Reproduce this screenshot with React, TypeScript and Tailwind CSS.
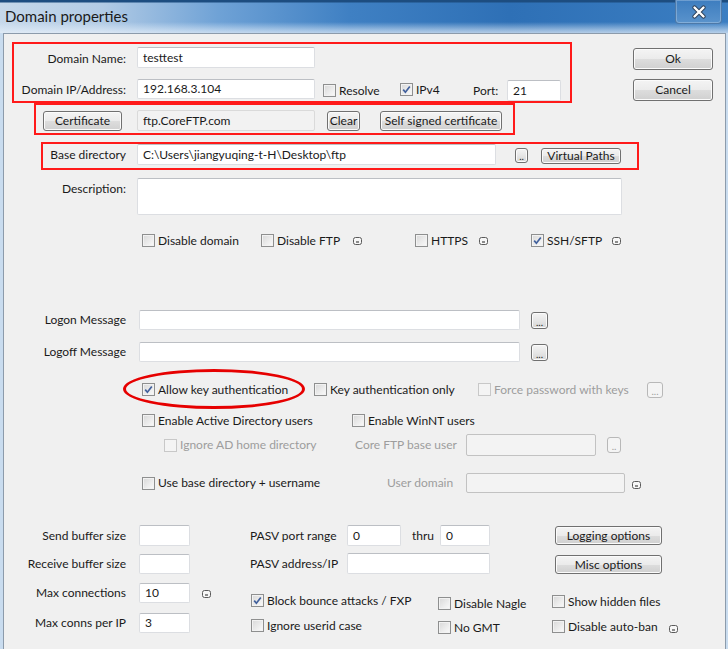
import React from "react";

type ChkProps = { checked?: boolean; disabled?: boolean };
function Chk({ checked = false, disabled = false }: ChkProps) {
  return (
    <span
      className={`relative inline-block w-[13px] h-[13px] shrink-0 border ${
        disabled
          ? "border-[#c8c8c8] bg-[#f4f4f4]"
          : "border-[#8e8f8f] bg-gradient-to-br from-[#d8d8d8] to-[#fbfbfb] shadow-[inset_0_0_0_1px_#f2f2f2]"
      }`}
    >
      {checked && (
        <svg className="absolute left-0 top-0" width="11" height="11" viewBox="0 0 11 11">
          <path d="M2.2 5.6 L4.4 8.2 L8.8 2.4" fill="none" stroke="#41609c" strokeWidth="1.7" />
        </svg>
      )}
    </span>
  );
}

type CIProps = { label: string; checked?: boolean; disabled?: boolean; cls?: string };
function CheckItem({ label, checked, disabled, cls = "" }: CIProps) {
  return (
    <div className={`flex items-center h-[13px] shrink-0 ${cls}`}>
      <Chk checked={checked} disabled={disabled} />
      <span className={`ml-[3px] whitespace-nowrap ${disabled ? "text-[#9d9d9d]" : ""}`}>{label}</span>
    </div>
  );
}

function Field({ cls = "", value = "", disabled = false }: { cls?: string; value?: string; disabled?: boolean }) {
  return (
    <div
      className={`flex items-center shrink-0 px-[5px] rounded-[2px] border whitespace-nowrap ${
        disabled ? "bg-[#f3f3f3] border-[#c2c2c2]" : "bg-white border-[#dcdee2] border-t-[#bcbfc4]"
      } ${cls}`}
    >
      {value}
    </div>
  );
}

function Btn({ cls = "", label }: { cls?: string; label: string }) {
  return (
    <div
      className={`flex items-center justify-center shrink-0 rounded-[3px] border border-[#707070] bg-[linear-gradient(to_bottom,#f4f4f4_0%,#ebebeb_50%,#dddddd_51%,#d0d0d0_100%)] shadow-[inset_0_0_0_1px_#fbfbfb] whitespace-nowrap ${cls}`}
    >
      {label}
    </div>
  );
}

function Dots({ cls = "", label = "...", disabled = false }: { cls?: string; label?: string; disabled?: boolean }) {
  return (
    <div
      className={`flex items-end justify-center shrink-0 rounded-[3px] border text-[10px] leading-[10px] pb-[1px] ${
        disabled
          ? "border-[#b8b8b8] bg-[#f4f4f4] text-[#9d9d9d]"
          : "border-[#707070] bg-[linear-gradient(to_bottom,#f4f4f4_0%,#e6e6e6_50%,#d6d6d6_100%)] shadow-[inset_0_0_0_1px_#fbfbfb]"
      } ${cls}`}
    >
      {label}
    </div>
  );
}

function Mini({ cls = "" }: { cls?: string }) {
  return (
    <svg className={`shrink-0 ${cls}`} width="9" height="8" viewBox="0 0 9 8">
      <rect x="0.5" y="0.5" width="8" height="7" rx="2" fill="#f6f6f6" stroke="#5a5a5a" />
      <line x1="3" y1="5" x2="6" y2="5" stroke="#222" />
    </svg>
  );
}

function Label({ text, cls = "" }: { text: string; cls?: string }) {
  return <div className={`w-[122px] shrink-0 text-right whitespace-nowrap ${cls}`}>{text}</div>;
}

export default function App() {
  return (
    <div className="relative w-[728px] h-[649px] overflow-hidden bg-[#c9dcef] font-['Lato',sans-serif] text-[12px] leading-[14px] text-[#1a1a1a]">
      {/* Title bar */}
      <div className="relative h-[33px] bg-[linear-gradient(to_bottom,#1d4d80_0px,#1d4d80_2px,rgba(255,255,255,0)_3px,rgba(255,255,255,0)_22px,rgba(230,240,250,0.55)_30px,rgba(235,242,250,0.7)_33px),linear-gradient(to_right,#c6d8ea_0%,#b2cbe5_14%,#6fa2d6_30%,#3f80c3_48%,#2e70b6_70%,#3b7ec2_100%)]">
        <div className="pl-[5px] pt-[7px] text-[15px] leading-[18px] text-[#1a1a1a] font-['Lato',sans-serif]">
          Domain properties
        </div>
        <div className="absolute right-[6px] top-0 w-[47px] h-[24px] rounded-b-[4px] border border-t-0 border-[#4d79a8] bg-[linear-gradient(to_bottom,#3d7dbf,#5a93cc)] shadow-[inset_0_0_0_1px_rgba(255,255,255,0.25)] flex items-center justify-center">
          <svg width="16" height="14" viewBox="0 0 16 14">
            <path d="M3.5 2.5 L12.5 11.5 M12.5 2.5 L3.5 11.5" stroke="#2d3e55" strokeWidth="4.2" strokeLinecap="round" />
            <path d="M3.5 2.5 L12.5 11.5 M12.5 2.5 L3.5 11.5" stroke="#ffffff" strokeWidth="2.4" strokeLinecap="round" />
          </svg>
        </div>
      </div>

      {/* Client area */}
      <div className="ml-[3px] w-[723px] h-[616px] bg-[#f0f0f0] border-l border-r border-t border-[#8c9bab] flex flex-col">
        {/* Row A */}
        <div className="mt-[13px] h-[23px] flex items-start">
          <Label text="Domain Name:" cls="mt-[5px]" />
          <Field cls="ml-[11px] w-[178px] h-[21px]" value="testtest" />
          <Btn cls="ml-[318px] mt-[1px] w-[80px] h-[22px]" label="Ok" />
        </div>
        {/* Row B */}
        <div className="mt-[9px] h-[22px] flex items-start">
          <Label text="Domain IP/Address:" cls="mt-[4px]" />
          <Field cls="ml-[11px] w-[178px] h-[20px]" value="192.168.3.104" />
          <CheckItem cls="ml-[8px] w-[77px] mt-[5px]" label="Resolve" />
          <CheckItem cls="w-[73px] mt-[4px]" label="IPv4" checked />
          <div className="w-[34px] mt-[5px]">Port:</div>
          <Field cls="mt-[1px] w-[54px] h-[21px]" value="21" />
          <Btn cls="ml-[72px] w-[80px] h-[22px]" label="Cancel" />
        </div>
        {/* Row C */}
        <div className="mt-[9px] h-[21px] flex items-start">
          <Btn cls="ml-[39px] mt-[1px] w-[79px] h-[20px]" label="Certificate" />
          <div className="ml-[15px] w-[178px] h-[21px] px-[5px] flex items-center rounded-[2px] border border-[#dadada] bg-[#f2f2f2]">
            ftp.CoreFTP.com
          </div>
          <Btn cls="ml-[12px] mt-[1px] w-[33px] h-[20px]" label="Clear" />
          <Btn cls="ml-[20px] mt-[1px] w-[122px] h-[20px]" label="Self signed certificate" />
        </div>
        {/* Row D */}
        <div className="mt-[13px] h-[21px] flex items-start">
          <Label text="Base directory" cls="mt-[4px]" />
          <Field cls="ml-[11px] w-[359px] h-[21px]" value="C:\Users\jiangyuqing-t-H\Desktop\ftp" />
          <Dots cls="ml-[19px] mt-[4px] w-[13px] h-[15px]" label=".." />
          <Btn cls="ml-[13px] mt-[4px] w-[80px] h-[16px]" label="Virtual Paths" />
        </div>
        {/* Row E */}
        <div className="mt-[13px] h-[37px] flex items-start">
          <Label text="Description:" cls="mt-[4px]" />
          <Field cls="ml-[11px] w-[485px] h-[37px]" />
        </div>
        {/* Row F */}
        <div className="mt-[18px] h-[15px] flex items-center">
          <CheckItem cls="ml-[138px] w-[119px]" label="Disable domain" />
          <CheckItem cls="w-[92px]" label="Disable FTP" />
          <div className="w-[62px] flex"><Mini /></div>
          <CheckItem cls="w-[64px]" label="HTTPS" />
          <div className="w-[52px] flex"><Mini /></div>
          <CheckItem cls="w-[81px]" label="SSH/SFTP" checked />
          <Mini />
        </div>
        {/* Row G */}
        <div className="mt-[62px] h-[20px] flex items-center">
          <Label text="Logon Message" />
          <Field cls="ml-[13px] w-[381px] h-[20px]" />
          <Dots cls="ml-[11px] w-[17px] h-[17px]" />
        </div>
        {/* Row H */}
        <div className="mt-[12px] h-[20px] flex items-center">
          <Label text="Logoff Message" />
          <Field cls="ml-[13px] w-[381px] h-[20px]" />
          <Dots cls="ml-[11px] w-[17px] h-[17px]" />
        </div>
        {/* Row I */}
        <div className="mt-[19px] h-[17px] flex items-center">
          <CheckItem cls="ml-[138px] w-[172px]" label="Allow key authentication" checked />
          <CheckItem cls="w-[164px]" label="Key authentication only" />
          <CheckItem cls="w-[169px]" label="Force password with keys" disabled />
          <Dots cls="w-[16px] h-[16px]" disabled />
        </div>
        {/* Row J */}
        <div className="mt-[15px] h-[15px] flex items-center">
          <CheckItem cls="ml-[138px] w-[210px]" label="Enable Active Directory users" />
          <CheckItem label="Enable WinNT users" />
        </div>
        {/* Row K */}
        <div className="mt-[6px] h-[22px] flex items-center">
          <CheckItem cls="ml-[160px] w-[191px]" label="Ignore AD home directory" disabled />
          <div className="w-[111px] shrink-0 whitespace-nowrap text-[#9d9d9d]">Core FTP base user</div>
          <Field cls="w-[130px] h-[22px]" disabled />
          <Dots cls="ml-[11px] w-[14px] h-[16px]" label=".." disabled />
        </div>
        {/* Row L */}
        <div className="mt-[17px] h-[20px] flex items-center">
          <CheckItem cls="ml-[138px] w-[245px]" label="Use base directory + username" />
          <div className="w-[79px] shrink-0 whitespace-nowrap text-[#9d9d9d]">User domain</div>
          <Field cls="w-[159px] h-[20px]" disabled />
          <Mini cls="ml-[7px] mt-[3px]" />
        </div>

        {/* Bottom */}
        <div className="mt-[32px] flex items-start">
          <div className="w-[206px] shrink-0 flex flex-col">
            <div className="h-[21px] flex items-center">
              <Label text="Send buffer size" />
              <Field cls="ml-[13px] w-[51px] h-[21px]" />
            </div>
            <div className="mt-[8px] h-[20px] flex items-center">
              <Label text="Receive buffer size" />
              <Field cls="ml-[13px] w-[51px] h-[20px]" />
            </div>
            <div className="mt-[9px] h-[20px] flex items-center">
              <Label text="Max connections" />
              <Field cls="ml-[13px] w-[51px] h-[20px]" value="10" />
              <Mini cls="ml-[12px] mt-[2px]" />
            </div>
            <div className="mt-[10px] h-[20px] flex items-center">
              <Label text="Max conns per IP" />
              <Field cls="ml-[13px] w-[51px] h-[20px]" value="3" />
            </div>
          </div>
          <div className="ml-[40px] flex flex-col">
            <div className="flex items-start">
              <div className="w-[240px] flex flex-col">
                <div className="h-[21px] flex items-center">
                  <div className="w-[97px] shrink-0 whitespace-nowrap">PASV port range</div>
                  <Field cls="w-[54px] h-[21px]" value="0" />
                  <div className="ml-[11px] w-[28px] shrink-0">thru</div>
                  <Field cls="w-[50px] h-[21px]" value="0" />
                </div>
                <div className="mt-[7px] h-[21px] flex items-center">
                  <div className="w-[97px] shrink-0 whitespace-nowrap">PASV address/IP</div>
                  <Field cls="w-[143px] h-[21px]" />
                </div>
              </div>
              <div className="ml-[65px] flex flex-col">
                <Btn cls="mt-[1px] w-[107px] h-[19px]" label="Logging options" />
                <Btn cls="mt-[10px] w-[107px] h-[19px]" label="Misc options" />
              </div>
            </div>
            <div className="flex items-start">
              <div className="ml-[1px] w-[187px] flex flex-col">
                <CheckItem cls="mt-[20px]" label="Block bounce attacks / FXP" checked />
                <CheckItem cls="mt-[12px]" label="Ignore userid case" />
              </div>
              <div className="w-[114px] flex flex-col">
                <CheckItem cls="mt-[23px]" label="Disable Nagle" />
                <CheckItem cls="mt-[11px]" label="No GMT" />
              </div>
              <div className="flex flex-col">
                <CheckItem cls="mt-[21px]" label="Show hidden files" />
                <div className="mt-[12px] flex items-center">
                  <CheckItem cls="w-[117px]" label="Disable auto-ban" />
                  <Mini cls="mt-[5px]" />
                </div>
              </div>
            </div>
          </div>
        </div>
      </div>

      {/* Red annotations (overlay) */}
      <div className="absolute left-[12px] top-[42px] w-[560px] h-[61px] border-2 border-[#ff1a1a] pointer-events-none" />
      <div className="absolute left-[34px] top-[103px] w-[481px] h-[32px] border-2 border-[#ff1a1a] pointer-events-none" />
      <div className="absolute left-[41px] top-[142px] w-[598px] h-[28px] border-2 border-[#ff1a1a] pointer-events-none" />
      <div className="absolute left-[123px] top-[369px] w-[182px] h-[40px] rounded-[50%] border-[3px] border-[#e60000] pointer-events-none" />
    </div>
  );
}
